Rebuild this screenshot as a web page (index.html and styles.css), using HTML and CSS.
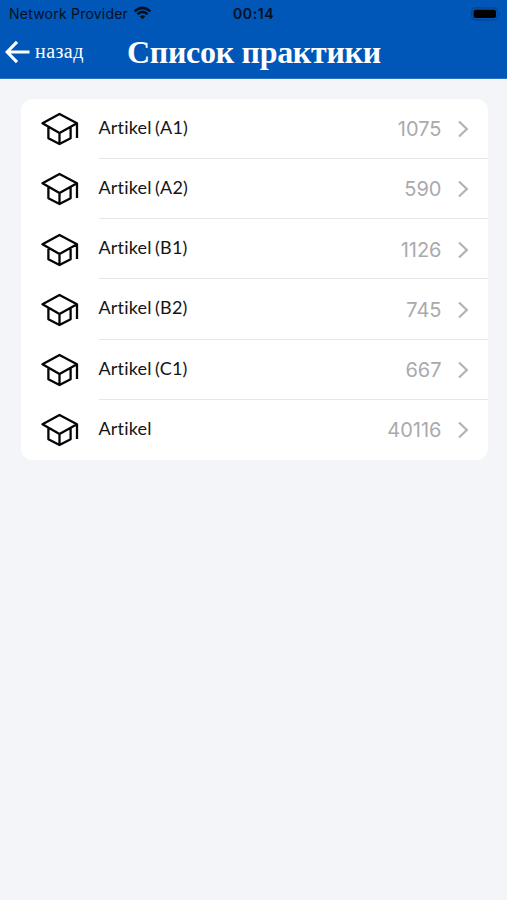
FILE: index.html
```html
<!DOCTYPE html>
<html lang="ru">
<head>
<meta charset="utf-8">
<title>Список практики</title>
<link rel="stylesheet" href="styles.css">
</head>
<body>
<svg class="defs" aria-hidden="true">
  <symbol id="cap" viewBox="0 0 40 36"><path d="M19.5 2.9 37 12.3 19.5 22.1 2.5 12.3ZM8.4 15.7V27.2L19.5 33.1 30.6 27.2V15.7M19.5 22.1V33.1M37 12.3V27"/></symbol>
  <symbol id="chevron" viewBox="0 0 12 18"><path d="M2 1.5 9.8 9 2 16.5"/></symbol>
</svg>
<header class="header">
  <div class="status">
    <span class="carrier">Network Provider</span>
    <svg class="wifi" viewBox="0 0 18 14"><path d="M1.2 5.4Q9-1.8 16.8 5.4M3.9 8.2Q9 3.7 14.1 8.2"/><path class="dot" d="M6.1 10.3Q9 8 11.9 10.3L9 13.2Z"/></svg>
    <span class="time">00:14</span>
    <svg class="battery" viewBox="0 0 30 14"><rect class="shell" x=".8" y=".8" width="25.8" height="12" rx="4"/><rect x="2.6" y="2.7" width="22.4" height="8.4" rx="2"/><path class="cap-end" d="M28 4.7Q30.6 6.8 28 9Z"/></svg>
  </div>
  <div class="nav">
    <a class="back"><svg class="arrow" viewBox="0 0 26 24"><path d="M25.5 12H2.5M12.5 1.5 2.2 12 12.5 22.5"/></svg><span>назад</span></a>
    <h1 class="title">Список практики</h1>
  </div>
</header>
<main class="list">
  <div class="row"><svg class="cap"><use href="#cap"/></svg><div class="body"><span class="name">Artikel (A1)</span><span class="count">1075</span><svg class="chevron"><use href="#chevron"/></svg></div></div>
  <div class="row"><svg class="cap"><use href="#cap"/></svg><div class="body"><span class="name">Artikel (A2)</span><span class="count">590</span><svg class="chevron"><use href="#chevron"/></svg></div></div>
  <div class="row"><svg class="cap"><use href="#cap"/></svg><div class="body"><span class="name">Artikel (B1)</span><span class="count">1126</span><svg class="chevron"><use href="#chevron"/></svg></div></div>
  <div class="row"><svg class="cap"><use href="#cap"/></svg><div class="body"><span class="name">Artikel (B2)</span><span class="count">745</span><svg class="chevron"><use href="#chevron"/></svg></div></div>
  <div class="row"><svg class="cap"><use href="#cap"/></svg><div class="body"><span class="name">Artikel (C1)</span><span class="count">667</span><svg class="chevron"><use href="#chevron"/></svg></div></div>
  <div class="row"><svg class="cap"><use href="#cap"/></svg><div class="body"><span class="name">Artikel</span><span class="count">40116</span><svg class="chevron"><use href="#chevron"/></svg></div></div>
</main>
</body>
</html>
```
FILE: styles.css
```css
* { box-sizing: border-box; }
body { margin: 0; min-height: 900px; background: #f3f5f9; font-family: Inter, sans-serif; }
svg { display: block; flex: none; fill: none; }
.defs { display: none; }
.header { height: 79px; background: #0057b7; border-bottom: 1px solid #2b72c2; }
.status { display: grid; grid-template-columns: auto 20px 1fr 30px; align-items: center; height: 28px; padding: 0 6px 0 9px; color: #03101f; font-size: 14px; line-height: 28px; }
.carrier { width: 124px; letter-spacing: 0.22px; white-space: nowrap; }
.wifi { width: 19px; height: 14px; margin-top: -2px; stroke: #03101f; stroke-width: 2.6; }
.wifi .dot { fill: #03101f; stroke: none; }
.time { padding-left: 80px; font-weight: 600; letter-spacing: 0.6px; }
.battery { width: 30px; height: 14px; margin-top: -1px; fill: #000; }
.battery .shell { fill: none; stroke: #064389; stroke-width: 1.3; }
.battery .cap-end { fill: #064389; }
.nav { display: flex; height: 48px; align-items: center; padding-left: 5px; color: #fff; font-family: "Liberation Serif", serif; }
.back { display: flex; width: 122px; align-items: center; gap: 5px; font-size: 20px; line-height: 24px; letter-spacing: 0.45px; }
.back span { padding-bottom: 2px; }
.arrow { width: 25px; height: 24px; stroke: #fff; stroke-width: 3.2; }
.title { margin: 0; font-size: 32px; line-height: 40px; letter-spacing: -0.3px; white-space: nowrap; }
.list { width: 467px; margin: 19.5px 0 0 20.5px; overflow: hidden; border-radius: 12px; background: #fff; }
.row { display: flex; height: 60.25px; padding-left: 19.5px; align-items: stretch; }
.cap { width: 40px; height: 36px; margin-top: 12.5px; stroke: #050505; stroke-width: 2.3; stroke-linejoin: round; }
.body { display: flex; flex: 1; align-items: center; margin-left: 18.5px; padding-right: 19px; border-bottom: 1px solid #e7e7e9; }
.row:last-child .body { border-bottom-color: transparent; }
.name { flex: 1; padding-bottom: 3px; color: #151515; font-family: Lato, sans-serif; font-size: 18px; line-height: 24px; letter-spacing: 0.2px; word-spacing: -1.5px; font-variant-ligatures: none; }
.count { color: #aaaaac; font-size: 20px; line-height: 26px; padding-top: 2px; }
.chevron { width: 12px; height: 18px; margin: 2px 0 0 15px; stroke: #b4b4b6; stroke-width: 2.3; }
```
